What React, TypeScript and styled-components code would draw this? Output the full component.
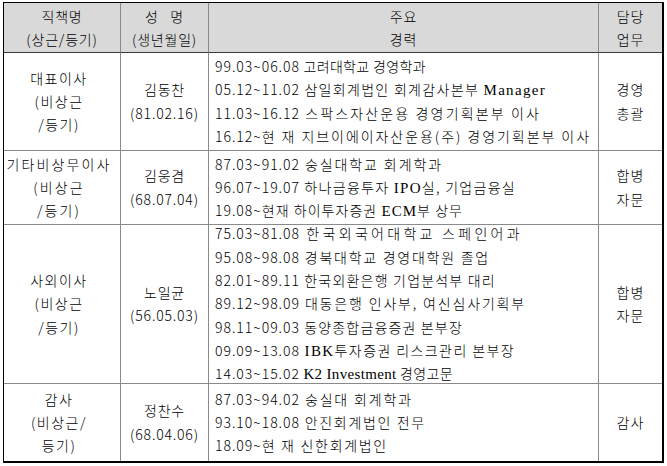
import React from "react";
import styled, { createGlobalStyle } from "styled-components";

const GlobalStyle = createGlobalStyle`
  html, body { margin: 0; padding: 0; background: #fff; }
  body {
    padding: 2px 0 0 3px;
    font-family: "Noto Sans CJK KR", "Noto Sans", sans-serif;
    color: #000;
  }
`;

const Table = styled.table`
  border-collapse: separate;
  border-spacing: 0;
  table-layout: fixed;
  width: 661px;
  border-top: 1px solid #000;
  border-left: 1px solid #000;
  border-right: 2px solid #000;
  border-bottom: 2px solid #000;
`;

const Row = styled.tr<{ $h: number }>`
  height: ${(p) => p.$h}px;
  &:last-child td { border-bottom: none; }
`;

const HeadCell = styled.th<{ $w: number }>`
  box-sizing: border-box;
  width: ${(p) => p.$w}px;
  background: #d9d9d9;
  border-right: 1px solid #8a8a8a;
  border-bottom: 1px solid #3a3a3a;
  font-weight: 300;
  font-size: 14px;
  line-height: 23px;
  letter-spacing: 0.8px;
  text-align: center;
  vertical-align: middle;
  padding: 0;
  white-space: pre;
  &:last-child { border-right: none; }
`;

const Cell = styled.td<{ $ls?: number; $pr?: number }>`
  box-sizing: border-box;
  border-right: 1px solid #8a8a8a;
  border-bottom: 1px solid #8a8a8a;
  font-weight: 300;
  font-size: 14px;
  line-height: 23.2px;
  letter-spacing: ${(p) => p.$ls ?? 0.8}px;
  text-align: center;
  vertical-align: middle;
  padding: 0 ${(p) => p.$pr ?? 0}px 0 0;
  white-space: pre;
  &:last-child { border-right: none; }
`;

const CareerCell = styled.td`
  box-sizing: border-box;
  border-right: 1px solid #8a8a8a;
  border-bottom: 1px solid #8a8a8a;
  vertical-align: middle;
  padding: 0 0 0 6px;
`;

const CareerList = styled.div`
  margin: -3px 0;
`;

const Line = styled.div`
  font-weight: 300;
  font-size: 14px;
  height: 23.3px;
  line-height: 23.3px;
  white-space: pre;
`;

const DateSpan = styled.span`
  letter-spacing: 0.96px;
`;

const Rest = styled.span<{ $ls: number }>`
  letter-spacing: ${(p) => p.$ls}px;
`;

const Latin = styled.span`
  font-family: "Liberation Serif", serif;
  font-size: 15px;
`;

type Part = string | { l: string };
type CareerLine = { date: string; ls: number; parts: Part[] };
type Person = {
  h: number;
  role: string;
  roleLs: number;
  name: string;
  career: CareerLine[];
  duty: string;
};

const people: Person[] = [
  {
    h: 98,
    role: "대표이사\n(비상근\n/등기)",
    roleLs: 1.5,
    name: "김동찬\n(81.02.16)",
    career: [
      { date: "99.03~06.08", ls: 0.35, parts: [" 고려대학교 경영학과"] },
      { date: "05.12~11.02", ls: 1.31, parts: [" 삼일회계법인 회계감사본부 ", { l: "Manager" }] },
      { date: "11.03~16.12", ls: 2.14, parts: [" 스팍스자산운용 경영기획본부 이사"] },
      { date: "16.12~", ls: 1.94, parts: ["현 재 지브이에이자산운용(주) 경영기획본부 이사"] },
    ],
    duty: "경영\n총괄",
  },
  {
    h: 74,
    role: "기타비상무이사\n(비상근\n/등기)",
    roleLs: 2.1,
    name: "김웅겸\n(68.07.04)",
    career: [
      { date: "87.03~91.02", ls: 1.9, parts: [" 숭실대학교 회계학과"] },
      { date: "96.07~19.07", ls: 1.29, parts: [" 하나금융투자 ", { l: "IPO" }, "실, 기업금융실"] },
      { date: "19.08~", ls: 1.05, parts: ["현재 하이투자증권 ", { l: "ECM" }, "부 상무"] },
    ],
    duty: "합병\n자문",
  },
  {
    h: 159,
    role: "사외이사\n(비상근\n/등기)",
    roleLs: 1.5,
    name: "노일균\n(56.05.03)",
    career: [
      { date: "75.03~81.08", ls: 3.29, parts: [" 한국외국어대학교 스페인어과"] },
      { date: "95.08~98.08", ls: 1.74, parts: [" 경북대학교 경영대학원 졸업"] },
      { date: "82.01~89.11", ls: 1.2, parts: [" 한국외환은행 기업분석부 대리"] },
      { date: "89.12~98.09", ls: 1.83, parts: [" 대동은행 인사부, 여신심사기획부"] },
      { date: "98.11~09.03", ls: 1.16, parts: [" 동양종합금융증권 본부장"] },
      { date: "09.09~13.08", ls: 1.41, parts: [" ", { l: "IBK" }, "투자증권 리스크관리 본부장"] },
      { date: "14.03~15.02", ls: 0.34, parts: [" ", { l: "K2 Investment" }, " 경영고문"] },
    ],
    duty: "합병\n자문",
  },
  {
    h: 77,
    role: "감사\n(비상근/\n등기)",
    roleLs: 1.5,
    name: "정찬수\n(68.04.06)",
    career: [
      { date: "87.03~94.02", ls: 1.84, parts: [" 숭실대 회계학과"] },
      { date: "93.10~18.08", ls: 1.67, parts: [" 안진회계법인 전무"] },
      { date: "18.09~", ls: 1.7, parts: ["현 재 신한회계법인"] },
    ],
    duty: "감사",
  },
];

function Career({ lines }: { lines: CareerLine[] }) {
  return (
    <CareerList>
      {lines.map((line, j) => (
        <Line key={j}>
          <DateSpan>{line.date}</DateSpan>
          <Rest $ls={line.ls}>
            {line.parts.map((pt, k) =>
              typeof pt === "string" ? (
                <React.Fragment key={k}>{pt}</React.Fragment>
              ) : (
                <Latin key={k}>{pt.l}</Latin>
              )
            )}
          </Rest>
        </Line>
      ))}
    </CareerList>
  );
}

export default function App() {
  return (
    <>
      <GlobalStyle />
      <Table>
        <thead>
          <Row $h={50}>
            <HeadCell $w={117}>{"직책명\n(상근/등기)"}</HeadCell>
            <HeadCell $w={88}>{"성   명\n(생년월일)"}</HeadCell>
            <HeadCell $w={390}>{"주요\n경력"}</HeadCell>
            <HeadCell $w={63}>{"담당\n업무"}</HeadCell>
          </Row>
        </thead>
        <tbody>
          {people.map((p, i) => (
            <Row key={i} $h={p.h}>
              <Cell $ls={p.roleLs} $pr={6}>{p.role}</Cell>
              <Cell>{p.name}</Cell>
              <CareerCell>
                <Career lines={p.career} />
              </CareerCell>
              <Cell $ls={1.2}>{p.duty}</Cell>
            </Row>
          ))}
        </tbody>
      </Table>
    </>
  );
}
